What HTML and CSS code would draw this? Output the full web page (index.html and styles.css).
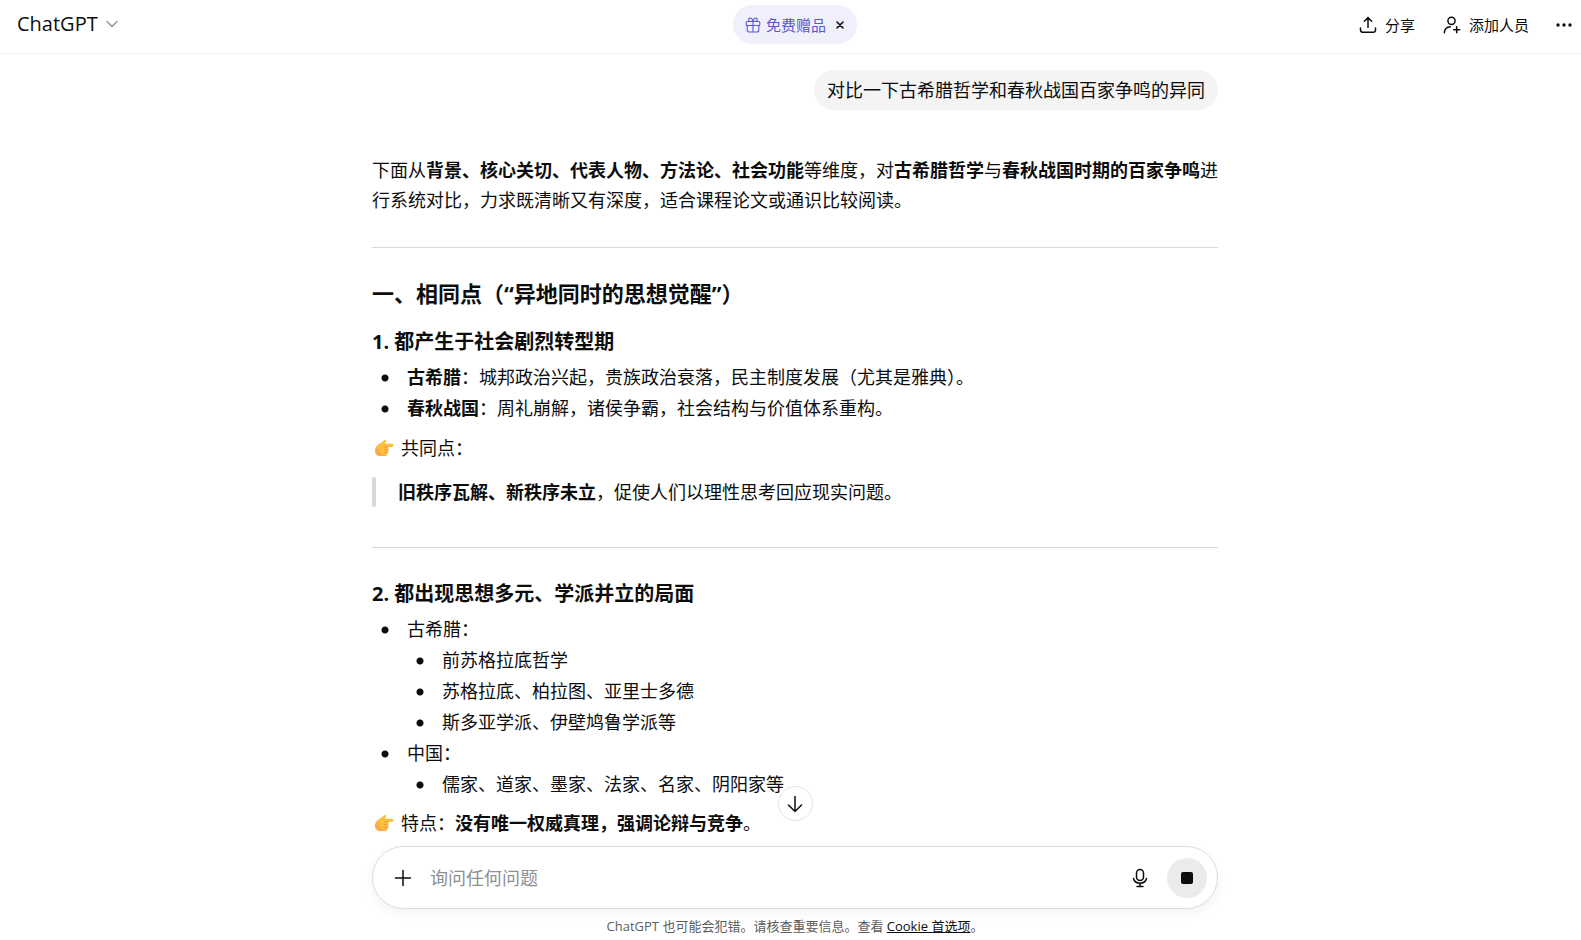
FILE: index.html
```
<!DOCTYPE html>
<html lang="zh-CN">
<head>
    <meta charset="UTF-8">
    <meta name="viewport" content="width=device-width, initial-scale=1.0">
    <title>ChatGPT</title>
    <link rel="stylesheet" href="styles.css">
</head>
<body>
<svg class="sprite" aria-hidden="true">
    <symbol id="hand" viewBox="0 0 20 18">
        <path fill="#fdbf3f" d="M1 11.500C1 7 4.500 5.200 7.500 3.500L10.300 1.200C11.500.3 12.900 1.700 12.100 2.900L10.800 4.700H18C20 4.700 20 7.900 18 7.900H13.800C15.300 8.500 15.100 10.300 14 10.700C15 11.400 14.700 13.100 13.600 13.400C14.300 14.200 13.800 15.500 12.800 15.700C12.700 16.700 11.800 17 10.800 17H6.500C3.200 17 1 15 1 11.500Z"/>
        <path fill="#f59a4b" opacity=".55" d="M1 11.500C1 15 3.200 17 6.500 17H10.800C11.800 17 12.700 16.700 12.800 15.700C8 16.500 5 14 4.500 8.500C2 9 1 10 1 11.500Z"/>
        <path fill="none" stroke="#e8893a" stroke-width=".7" stroke-linecap="round" d="M10.500 8H13.500M10.500 10.800H13.900M10.500 13.500H13.500"/>
    </symbol>
</svg>

<header class="topbar">
    <button class="model">ChatGPT
        <svg width="12" height="8" viewBox="0 0 12 8"><path d="M1 1.500l5 5 5-5"/></svg>
    </button>
    <div class="gift">
        <button class="gift-link">
            <svg width="16" height="16" viewBox="0 0 16 16"><rect x="1.200" y="4.500" width="13.600" height="4" rx="1"/><path d="M2.200 8.500v4.500a2 2 0 0 0 2 2h7.600a2 2 0 0 0 2-2V8.500M8 4.500V15M8 4.500C7.500 2.300 6.500 1 5.200 1c-2 0-2.200 3.500.3 3.500M8 4.500C8.500 2.300 9.500 1 10.800 1c2 0 2.200 3.500-.3 3.500"/></svg>
            免费赠品
        </button>
        <button class="gift-close" aria-label="关闭">
            <svg width="8" height="8" viewBox="0 0 8 8"><path d="M1 1l6 6M7 1L1 7"/></svg>
        </button>
    </div>
    <nav class="actions">
        <button>
            <svg width="18" height="18" viewBox="0 0 18 18"><path d="M9 11.500V1.500M5.400 5.200L9 1.500l3.600 3.700M1.500 12v2a2.300 2.300 0 0 0 2.300 2.300h10.400a2.300 2.300 0 0 0 2.300-2.300v-2"/></svg>
            分享
        </button>
        <button>
            <svg width="18" height="18" viewBox="0 0 18 18"><circle cx="8.500" cy="4.800" r="3.600"/><path d="M1.300 16.800c.2-3.600 2.300-5.800 6-6.100M13.700 10.800v6M10.700 13.800h6"/></svg>
            添加人员
        </button>
        <button aria-label="更多">
            <svg class="dots" width="18" height="18" viewBox="0 0 18 18"><circle cx="3" cy="9" r="1.700"/><circle cx="9" cy="9" r="1.700"/><circle cx="15" cy="9" r="1.700"/></svg>
        </button>
    </nav>
</header>

<main class="thread">
    <div class="column">
        <div class="question">对比一下古希腊哲学和春秋战国百家争鸣的异同</div>
        <article class="answer">
            <p>下面从<strong>背景、核心关切、代表人物、方法论、社会功能</strong>等维度，对<strong>古希腊哲学</strong>与<strong>春秋战国时期的百家争鸣</strong>进行系统对比，力求既清晰又有深度，适合课程论文或通识比较阅读。</p>
            <hr>
            <h2>一、相同点（“异地同时的思想觉醒”）</h2>
            <h3>1. 都产生于社会剧烈转型期</h3>
            <ul>
                <li><strong>古希腊</strong>：城邦政治兴起，贵族政治衰落，民主制度发展（尤其是雅典）。</li>
                <li><strong>春秋战国</strong>：周礼崩解，诸侯争霸，社会结构与价值体系重构。</li>
            </ul>
            <p class="point"><svg class="hand" role="img" aria-label="👉"><use href="#hand"/></svg>共同点：</p>
            <blockquote><strong>旧秩序瓦解、新秩序未立</strong>，促使人们以理性思考回应现实问题。</blockquote>
            <hr>
            <h3>2. 都出现思想多元、学派并立的局面</h3>
            <ul>
                <li>古希腊：
                    <ul>
                        <li>前苏格拉底哲学</li>
                        <li>苏格拉底、柏拉图、亚里士多德</li>
                        <li>斯多亚学派、伊壁鸠鲁学派等</li>
                    </ul>
                </li>
                <li>中国：
                    <ul>
                        <li>儒家、道家、墨家、法家、名家、阴阳家等</li>
                    </ul>
                </li>
            </ul>
            <p class="point last"><svg class="hand" role="img" aria-label="👉"><use href="#hand"/></svg>特点：<strong>没有唯一权威真理，强调论辩与竞争</strong>。</p>
        </article>
    </div>
</main>

<footer class="bottom">
    <button class="scroll-down" aria-label="滚动到底部">
        <svg width="18" height="18" viewBox="0 0 18 18"><path d="M9 1.500v15M2.500 10L9 16.500 15.500 10"/></svg>
    </button>
    <form class="composer">
        <button type="button" aria-label="添加文件">
            <svg width="18" height="18" viewBox="0 0 18 18"><path d="M9 1.500v15M1.500 9h15"/></svg>
        </button>
        <input type="text" placeholder="询问任何问题" aria-label="询问任何问题">
        <button type="button" aria-label="听写">
            <svg width="18" height="20" viewBox="0 0 18 20"><rect x="5.500" y="1.500" width="7" height="11" rx="3.500"/><path d="M2.500 10.500c.7 3 3.200 4.700 6.500 4.700s5.800-1.700 6.500-4.700M9 15.200v3M6 18.500h6"/></svg>
        </button>
        <button type="button" class="stop" aria-label="停止"><span></span></button>
    </form>
    <p class="notice">ChatGPT 也可能会犯错。请核查重要信息。查看 <a href="#">Cookie 首选项</a>。</p>
</footer>
</body>
</html>
```
FILE: styles.css
```
* {
    box-sizing: border-box;
}
body {
    margin: 0;
    height: 100vh;
    display: flex;
    flex-direction: column;
    overflow: hidden;
    background: #fff;
    color: #0d0d0d;
    font-family: "Open Sans", "Noto Sans CJK SC", sans-serif;
    font-size: 18px;
    line-height: 30px;
}
button {
    display: flex;
    align-items: center;
    justify-content: center;
    padding: 0;
    border: none;
    background: none;
    color: inherit;
    font: inherit;
    cursor: pointer;
}
svg {
    flex: none;
    fill: none;
    stroke: currentColor;
    stroke-width: 1.5;
    stroke-linecap: round;
    stroke-linejoin: round;
}
.sprite {
    display: none;
}

/* header */
.topbar {
    flex: none;
    display: grid;
    grid-template-columns: 1fr auto 1fr;
    align-items: center;
    height: 54px;
    padding: 0 8px 4px 17px;
    border-bottom: 1px solid #f0f0f0;
    font-size: 15px;
    line-height: 20px;
}
.model {
    justify-self: start;
    gap: 8px;
    padding-bottom: 2px;
    font-size: 20px;
    line-height: 28px;
}
.model svg {
    color: #8f8f8f;
    stroke-width: 1.3;
}
.gift {
    display: flex;
    align-items: center;
    gap: 10px;
    height: 39px;
    padding: 0 13px 0 12px;
    border-radius: 20px;
    background: #f0f0fc;
}
.gift-link {
    gap: 5px;
    color: #5b57d1;
}
.gift-link svg {
    stroke-width: 1.1;
}
.gift-close svg {
    stroke-width: 1.6;
}
.actions {
    display: flex;
    justify-content: flex-end;
    gap: 28px;
}
.actions button {
    gap: 8px;
}
.actions button:last-child {
    margin-left: -2px;
}
.dots {
    fill: currentColor;
    stroke: none;
}

/* conversation */
.thread {
    flex: 1;
    min-height: 0;
    overflow: hidden;
    padding: 16px 0 0 9px;
}
.column {
    display: flex;
    flex-direction: column;
    max-width: 846px;
    margin: 0 auto;
}
.question {
    align-self: flex-end;
    margin-bottom: 45px;
    padding: 5px 13px;
    border-radius: 20px;
    background: #f4f4f4;
}
.answer p,
.answer h2,
.answer h3,
.answer blockquote {
    margin: 0;
}
.answer hr {
    height: 1px;
    margin: 32px 0;
    border: none;
    background: #d9d9d9;
}
.answer h2 {
    margin: -3px 0 19px;
    font-size: 22px;
    line-height: 32px;
}
.answer h3 {
    margin-bottom: 6px;
    font-size: 20px;
    line-height: 28px;
}
.answer ul {
    margin: 0;
    padding: 0;
    list-style: none;
    line-height: 31px;
}
.answer li {
    padding-left: 35px;
    background: radial-gradient(circle at 13px 16px, #0d0d0d 3px, transparent 4px) no-repeat;
}
.answer .point {
    display: flex;
    align-items: center;
    margin: 9px 0 14px;
}
.answer .last {
    margin: 8px 0 0;
}
.hand {
    width: 20px;
    height: 18px;
    margin: 0 7px 0 2px;
    stroke: none;
}
.answer blockquote {
    display: flex;
    margin-bottom: 40px;
}
.answer blockquote::before {
    content: "";
    width: 4px;
    margin-right: 22px;
    border-radius: 2px;
    background: #d9d9d9;
}

/* message box */
.bottom {
    position: relative;
    flex: none;
    padding: 0 0 4px 9px;
}
.scroll-down {
    position: absolute;
    top: -60px;
    left: calc(50% + 4px);
    width: 35px;
    height: 35px;
    margin-left: -17px;
    border: 1px solid #e3e3e3;
    border-radius: 50%;
    background: #fff;
}
.composer {
    display: flex;
    align-items: center;
    max-width: 846px;
    height: 63px;
    margin: 0 auto;
    padding: 0 10px 0 21px;
    border: 1px solid #dcdcdc;
    border-radius: 32px;
    background: #fff;
    box-shadow: 0 4px 12px rgba(0, 0, 0, 0.05);
}
.composer input {
    flex: 1;
    min-width: 0;
    margin: 0 18px;
    padding: 0;
    border: none;
    outline: none;
    background: none;
    color: inherit;
    font: inherit;
}
.composer input::placeholder {
    color: #8f8f8f;
    opacity: 1;
}
.composer .stop {
    width: 40px;
    height: 40px;
    margin-left: 18px;
    border-radius: 50%;
    background: #ebebeb;
}
.stop span {
    width: 12px;
    height: 12px;
    border-radius: 2px;
    background: #0d0d0d;
}
.notice {
    margin: 7px 0 0;
    color: #5d5d5d;
    font-size: 13px;
    line-height: 20px;
    text-align: center;
}
.notice a {
    color: #0d0d0d;
}
```
